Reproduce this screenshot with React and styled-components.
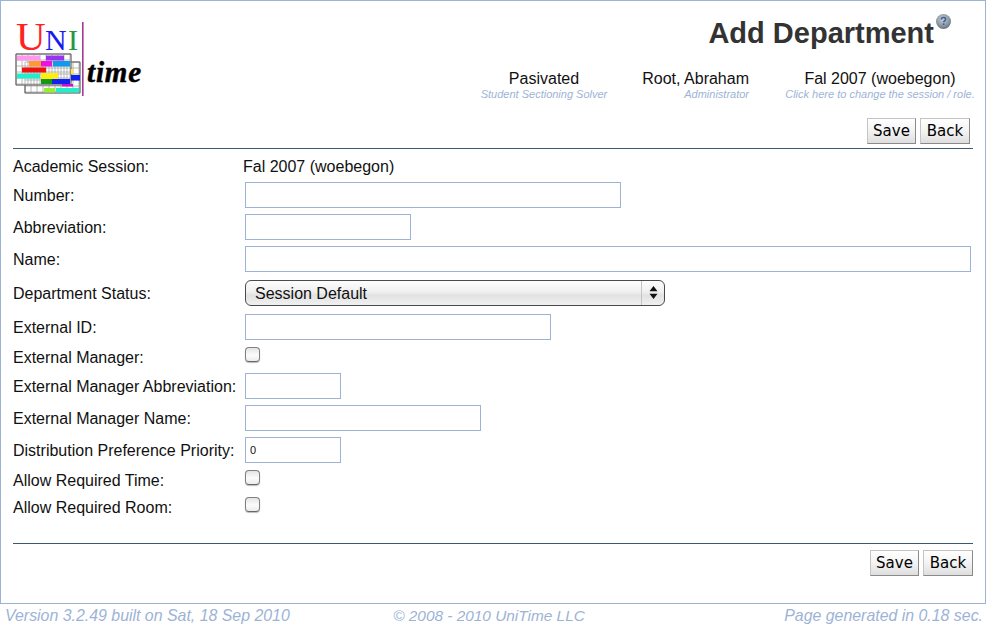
import React from 'react';
import styled, { createGlobalStyle } from 'styled-components';

const GlobalStyle = createGlobalStyle`
  html, body {
    margin: 0;
    padding: 0;
    background: #fff;
    font-family: "Liberation Sans", Arial, sans-serif;
    color: #111;
  }
`;

const Panel = styled.div`
  box-sizing: border-box;
  width: 986px;
  height: 604px;
  border: 1px solid #9db3d6;
  padding: 0 12px;
`;

const Header = styled.div`
  display: flex;
  justify-content: space-between;
  height: 101px;
`;

const LogoBox = styled.div`
  width: 150px;
  padding: 9px 0 0 2px;
`;

const HeaderRight = styled.div`
  display: flex;
  flex-direction: column;
  align-items: flex-end;
  width: 520px;
`;

const TitleRow = styled.div`
  display: flex;
  align-items: flex-start;
  height: 68px;
  padding: 12px 21px 0 0;
  box-sizing: border-box;
`;

const Title = styled.h1`
  margin: 4px 1px 0 0;
  font-size: 29px;
  line-height: 32px;
  font-weight: bold;
  color: #333;
`;

const InfoRow = styled.div`
  display: flex;
  width: 100%;
  justify-content: flex-end;
`;

const InfoCell = styled.div`
  flex: none;
  width: ${(p) => p.$width}px;
  margin-right: ${(p) => p.$gap || 0}px;
  text-align: ${(p) => p.$align || 'center'};
  font-size: 16px;
  line-height: 19px;
  white-space: nowrap;
`;

const InfoSub = styled.div`
  font-size: 11px;
  line-height: 12px;
  font-style: italic;
  color: #9db3d6;
`;

const ButtonBar = styled.div`
  display: flex;
  justify-content: flex-end;
  gap: 4px;
  height: ${(p) => p.$height}px;
  padding-right: ${(p) => p.$right}px;
  padding-top: ${(p) => p.$top}px;
  box-sizing: border-box;
`;

const Button = styled.button`
  box-sizing: border-box;
  height: 26px;
  width: ${(p) => p.$width}px;
  padding: 0;
  border: 1px solid #8a8a8a;
  border-color: #c4c4c4 #8a8a8a #8a8a8a #c4c4c4;
  background: linear-gradient(#fff, #f3f3f3 50%, #dedede);
  font-family: "DejaVu Sans", Verdana, sans-serif;
  font-size: 15px;
  color: #000;
`;

const Rule = styled.div`
  height: 1px;
  background: #3d5872;
  margin-top: ${(p) => p.$top || 0}px;
`;

const Form = styled.div`
  padding-top: 5px;
`;

const Row = styled.div`
  display: flex;
  align-items: center;
  height: ${(p) => p.$height}px;
`;

const Label = styled.div`
  width: 232px;
  flex: none;
  font-size: 16px;
  line-height: 18px;
  margin-top: ${(p) => (p.$low ? 3 : 1)}px;
  white-space: nowrap;
  color: #111;
`;

const Value = styled.div`
  font-size: 16px;
  line-height: 18px;
  margin-left: -2px;
  margin-top: 1px;
`;

const Field = styled.input`
  box-sizing: border-box;
  width: ${(p) => p.$width}px;
  height: 26px;
  padding: 0 4px;
  margin: 0;
  border: 1px solid #9db3d6;
  outline: none;
  background: #fff;
  font-family: "Liberation Sans", Arial, sans-serif;
  font-size: 11px;
  color: #111;
`;

const SelectBox = styled.div`
  box-sizing: border-box;
  display: flex;
  align-items: stretch;
  width: 420px;
  height: 26px;
  border: 1px solid #4a4a4a;
  border-radius: 6px;
  background: linear-gradient(#fdfdfd, #f0f0f0 45%, #e2e2e2 60%, #f0f0f0);
  font-size: 16px;
`;

const SelectText = styled.div`
  flex: 1;
  padding-left: 9px;
  line-height: 26px;
  color: #111;
`;

const SelectArrows = styled.div`
  width: 22px;
  border-left: 1px solid #c4c4c4;
  display: flex;
  align-items: center;
  justify-content: center;
`;

const CheckBox = styled.input.attrs({ type: 'checkbox' })`
  appearance: none;
  box-sizing: border-box;
  width: 15px;
  height: 15px;
  margin: -5px 0 0 0;
  border: 1px solid #7f7f7f;
  border-bottom-color: #666;
  border-radius: 4px;
  background: linear-gradient(#e4e4e4, #fbfbfb 55%, #ececec);
  box-shadow: 0 1px 1px #bbb;
`;

const Footer = styled.div`
  display: grid;
  grid-template-columns: 1fr 1fr 1fr;
  padding: 3px 3px 0 5px;
  font-size: 15.9px;
  line-height: 18px;
  font-style: italic;
  color: #9db3d6;
  white-space: nowrap;
`;

const FooterCenter = styled.div`
  text-align: center;
  margin-left: -10px;
  font-size: 15.4px;
`;

const FooterRight = styled.div`
  text-align: right;
`;

const gridLines = (x0, y0, x1, y1, step = 6) => {
  const out = [];
  for (let x = x0; x <= x1; x += step) out.push(<line key={'v' + x} x1={x} y1={y0} x2={x} y2={y1} />);
  for (let y = y0; y <= y1; y += step) out.push(<line key={'h' + y} x1={x0} y1={y} x2={x1} y2={y} />);
  return out;
};

const blocks = [
  [17, 55.5, 23, 5, '#ff99ee'],
  [46, 55.5, 18, 5, '#9933ee'],
  [29, 61, 12, 5.5, '#ff9933'],
  [41, 61, 11, 5.5, '#ee11dd'],
  [53, 61, 17, 5.5, '#1199ee'],
  [22, 67.5, 24, 5, '#ee1111'],
  [17, 73.5, 23, 5, '#22eecc'],
  [41, 73, 17, 6, '#ffee11'],
  [71, 69, 2, 5, '#ffee11'],
  [71, 75, 9, 5.5, '#1122ee'],
  [41, 79, 11, 5, '#119911'],
  [52, 79, 18, 5, '#1122ee'],
  [62, 84, 11, 2.5, '#cc11cc'],
  [44, 88, 11, 4.5, '#99ee33'],
  [56, 88, 23, 4.5, '#22eecc'],
];

// drawn in page coordinates so it can be read against the screenshot
function Logo() {
  return (
    <svg width="130" height="90" viewBox="15 10 130 90">
      <text x="16" y="50" fontFamily="Liberation Serif" fontSize="41" fill="#ff2222">U</text>
      <text x="45" y="50" fontFamily="Liberation Serif" fontSize="30" fill="#1a1aee">N</text>
      <text x="68" y="50" fontFamily="Liberation Serif" fontSize="30" fill="#229944">I</text>
      <g stroke="#a8a8a8" strokeWidth="0.8" fill="#fff">
        <rect x="25" y="62" width="55" height="31" />
        <rect x="16" y="54" width="55" height="31" />
        {gridLines(25, 62, 79, 93)}
        {gridLines(16, 54, 70, 85)}
      </g>
      <g stroke="#666" strokeWidth="1" fill="none">
        <path d="M16 54H71V85H16Z" />
        <path d="M71 62H80V93H25V85" />
      </g>
      {blocks.map(([x, y, w, h, c]) => (
        <rect key={x + '-' + y} x={x} y={y} width={w} height={h} fill={c} />
      ))}
      <rect x="82" y="22" width="1.6" height="74" fill="#a33d92" />
      <text x="87" y="82" fontFamily="Liberation Serif" fontSize="29" fontStyle="italic" fontWeight="bold" fill="#000" stroke="#000" strokeWidth="0.5" textLength="54">time</text>
    </svg>
  );
}

function HelpIcon() {
  return (
    <svg width="17" height="17" viewBox="0 0 17 17">
      <defs>
        <radialGradient id="help" cx="0.45" cy="0.35" r="0.7">
          <stop offset="0" stopColor="#c6ced6" />
          <stop offset="0.6" stopColor="#8d99a6" />
          <stop offset="1" stopColor="#5f6a74" />
        </radialGradient>
      </defs>
      <circle cx="8.5" cy="8.5" r="7.5" fill="url(#help)" />
      <path d="M6.4 6.4c0-1.2 1-1.8 2.1-1.8s2.1.6 2.1 1.7c0 1.5-2 1.5-2 3" fill="none" stroke="#3f5f96" strokeWidth="1.5" />
      <rect x="7.8" y="10.4" width="1.6" height="1.6" fill="#3f5f96" />
    </svg>
  );
}

function SelectArrowIcon() {
  return (
    <svg width="9" height="15" viewBox="0 0 9 15">
      <path d="M4.5 1 8.5 6.2H.5Z M4.5 14 .5 8.8H8.5Z" fill="#111" />
    </svg>
  );
}

export default function App() {
  return (
    <>
      <GlobalStyle />
      <Panel>
        <Header>
          <LogoBox>
            <Logo />
          </LogoBox>
          <HeaderRight>
            <TitleRow>
              <Title>Add Department</Title>
              <HelpIcon />
            </TitleRow>
            <InfoRow>
              <InfoCell $width={130} $gap={20}>
                Pasivated
                <InfoSub>Student Sectioning Solver</InfoSub>
              </InfoCell>
              <InfoCell $width={120} $gap={36} $align="right">
                Root, Abraham
                <InfoSub>Administrator</InfoSub>
              </InfoCell>
              <InfoCell $width={190} $gap={-2}>
                Fal 2007 (woebegon)
                <InfoSub>Click here to change the session / role.</InfoSub>
              </InfoCell>
            </InfoRow>
          </HeaderRight>
        </Header>
        <ButtonBar $height={46} $right={3} $top={16}>
          <Button $width={49}>Save</Button>
          <Button $width={50}>Back</Button>
        </ButtonBar>
        <Rule />
        <Form>
          <Row $height={25}>
            <Label>Academic Session:</Label>
            <Value>Fal 2007 (woebegon)</Value>
          </Row>
          <Row $height={32}>
            <Label>Number:</Label>
            <Field $width={376} />
          </Row>
          <Row $height={32}>
            <Label>Abbreviation:</Label>
            <Field $width={166} />
          </Row>
          <Row $height={32}>
            <Label>Name:</Label>
            <Field $width={726} />
          </Row>
          <Row $height={35}>
            <Label $low>Department Status:</Label>
            <SelectBox>
              <SelectText>Session Default</SelectText>
              <SelectArrows>
                <SelectArrowIcon />
              </SelectArrows>
            </SelectBox>
          </Row>
          <Row $height={33}>
            <Label $low>External ID:</Label>
            <Field $width={306} />
          </Row>
          <Row $height={27}>
            <Label $low>External Manager:</Label>
            <CheckBox />
          </Row>
          <Row $height={32}>
            <Label>External Manager Abbreviation:</Label>
            <Field $width={96} />
          </Row>
          <Row $height={32}>
            <Label>External Manager Name:</Label>
            <Field $width={236} />
          </Row>
          <Row $height={32}>
            <Label>Distribution Preference Priority:</Label>
            <Field $width={96} defaultValue="0" />
          </Row>
          <Row $height={27}>
            <Label $low>Allow Required Time:</Label>
            <CheckBox />
          </Row>
          <Row $height={27}>
            <Label $low>Allow Required Room:</Label>
            <CheckBox />
          </Row>
        </Form>
        <Rule $top={23} />
        <ButtonBar $height={40} $right={0} $top={6}>
          <Button $width={49}>Save</Button>
          <Button $width={50}>Back</Button>
        </ButtonBar>
      </Panel>
      <Footer>
        <div>Version 3.2.49 built on Sat, 18 Sep 2010</div>
        <FooterCenter>© 2008 - 2010 UniTime LLC</FooterCenter>
        <FooterRight>Page generated in 0.18 sec.</FooterRight>
      </Footer>
    </>
  );
}
